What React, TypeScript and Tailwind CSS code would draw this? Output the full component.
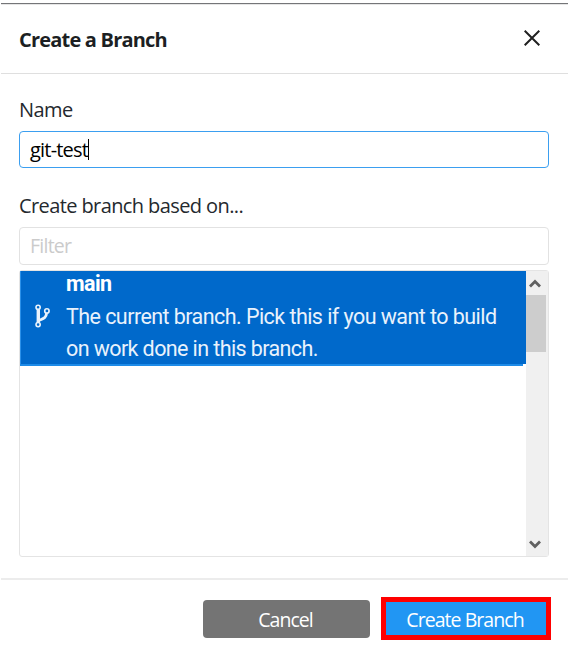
import React from 'react';

function BranchIcon() {
  return (
    <svg className="mt-[33px] ml-[13px] h-6 w-[17px] shrink-0" viewBox="0 0 17 24" fill="none" stroke="#eaf3fc">
      <circle cx="4.1" cy="3.3" r="2.1" strokeWidth="1.6" />
      <circle cx="4.1" cy="20.6" r="2.1" strokeWidth="1.6" />
      <circle cx="12.9" cy="6.9" r="2.2" strokeWidth="1.6" />
      <path d="M4.3 5.4V18.3" strokeWidth="3.4" />
      <path d="M12.6 9.2C12.2 14.4 9 14.6 4.5 16.6" strokeWidth="2.8" />
    </svg>
  );
}

export default function App() {
  return (
    <div className="h-[646px] w-[575px] overflow-hidden bg-white pt-[3px] pl-px font-['Open_Sans','Noto_Sans',sans-serif] text-[20px] text-[#24292e]">
      <div className="flex h-[643px] w-[567px] flex-col border-t border-[#747578]">
        <header className="flex h-[70px] shrink-0 items-center justify-between border-b border-[#dfdfdf] pr-[28px] pl-[18px] shadow-[inset_0_1px_0_#e6e6e6]">
          <h1 className="mt-[2px] text-[20px] leading-none font-bold tracking-[-0.8px] whitespace-nowrap text-[#1c1f23]">Create a Branch</h1>
          <svg className="mb-[2px] h-4 w-4" viewBox="0 0 16 16" stroke="#202020" strokeWidth="2" fill="none">
            <path d="M0.7 0.7L15.3 15.3M15.3 0.7L0.7 15.3" />
          </svg>
        </header>
        <main className="flex h-[504px] shrink-0 flex-col pr-[19px] pl-[18px]">
          <label className="mt-[22px] h-[35px] leading-[28px] tracking-[-0.6px]">Name</label>
          <div className="flex h-[37px] items-center rounded-[4px] border border-[#3b9ff0] pl-[10px] text-black">
            <span className="tracking-[-0.8px] whitespace-nowrap">git-test</span>
            <span className="h-[21px] w-px bg-black" />
          </div>
          <label className="mt-[24px] h-[35px] leading-[28px] tracking-[-0.6px]">Create branch based on...</label>
          <div className="flex h-[38px] items-center rounded-[4px] border border-[#e2e2e2] pb-px pl-[10px] text-[19.5px] tracking-[-0.75px] text-[#cbcbcb]">Filter</div>
          <div className="mt-[5px] flex h-[287px] rounded-[3px] border border-[#e4e4e4]">
            <div className="w-[506px]">
              <div className="flex h-[93px] border-l border-[#2b91ea] bg-[#0069cb] font-[Roboto,sans-serif] text-white">
                <BranchIcon />
                <div className="ml-[15px] pt-px text-[21.5px] leading-[32px] whitespace-nowrap">
                  <div className="-mt-[4px] font-bold tracking-[-0.6px]">main</div>
                  <div className="mt-px tracking-[-0.56px] text-[#e9f2fc]">The current branch. Pick this if you want to build</div>
                  <div className="tracking-[-0.6px] text-[#e9f2fc]">on work done in this branch.</div>
                </div>
              </div>
              <div className="h-[2px] w-[503px] bg-[#1d8be8]" />
            </div>
            <div className="flex w-[22px] flex-col bg-[#f0f0f0]">
              <svg className="mt-[8px] ml-[3px] h-[9px] w-3" viewBox="0 0 12 9" fill="none" stroke="#606060" strokeWidth="2.8"><path d="M1 7.5L6 2.5L11 7.5" /></svg>
              <div className="mt-[7px] h-[57px] w-5 bg-[#cdcdcd]" />
              <svg className="mt-auto mb-[7px] ml-[3px] h-[9px] w-3" viewBox="0 0 12 9" fill="none" stroke="#606060" strokeWidth="2.8"><path d="M1 1.5L6 6.5L11 1.5" /></svg>
            </div>
          </div>
        </main>
        <footer className="flex h-[65px] shrink-0 items-start justify-end border-t-2 border-[#ececec] pt-[17px] pr-[17px] text-[19.5px] text-white">
          <button className="mt-[3px] mr-[11px] h-[38px] w-[167px] rounded-[4px] bg-[#747474] pt-[2px] pr-[2px] tracking-[-0.95px]">Cancel</button>
          <button className="h-[43px] w-[170px] border-[5px] border-[#ff0000] bg-[#2196f3] pt-[2px] pr-[2px] tracking-[-0.95px] whitespace-nowrap">Create Branch</button>
        </footer>
      </div>
    </div>
  );
}
